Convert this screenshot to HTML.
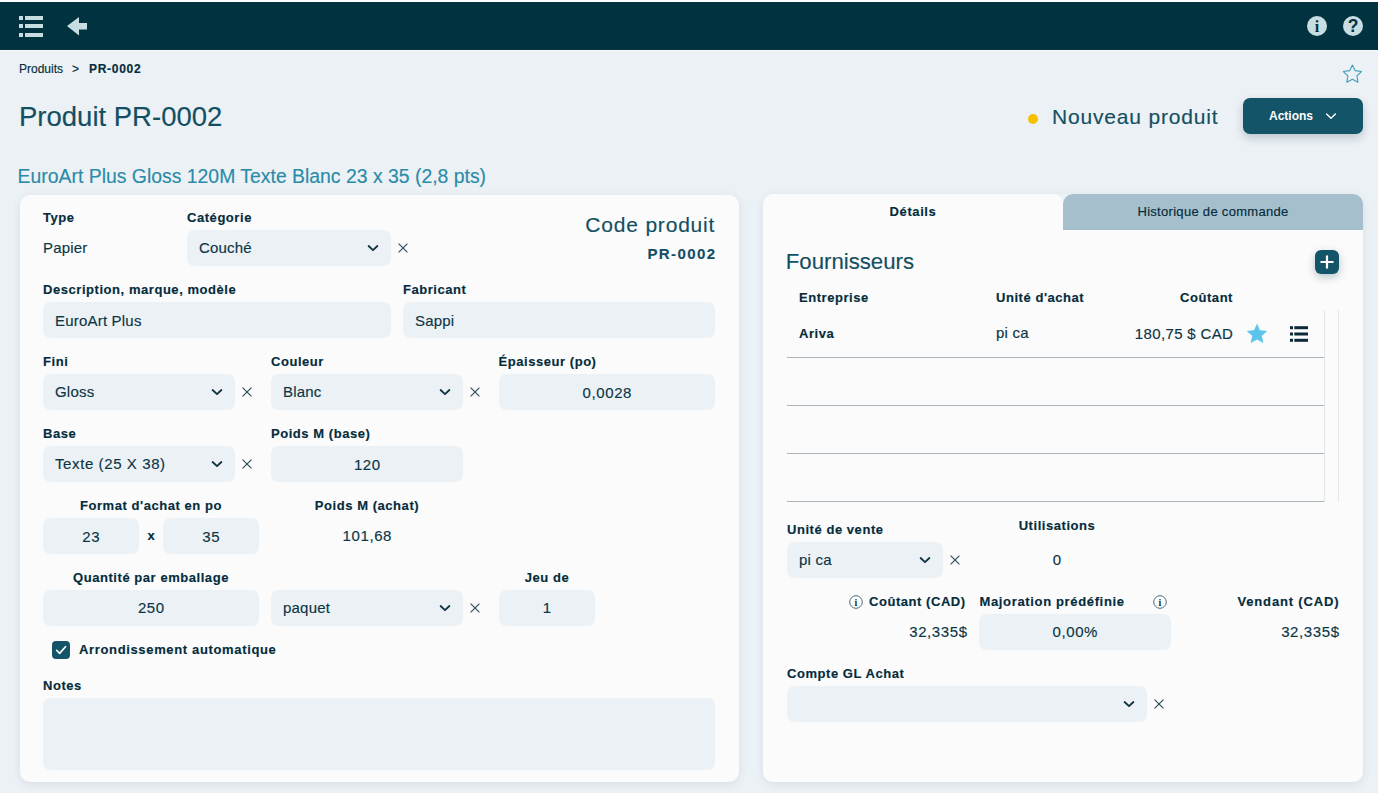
<!DOCTYPE html>
<html><head><meta charset="utf-8"><title>Produit PR-0002</title>
<style>
html,body{margin:0;padding:0;}
body{width:1378px;height:793px;overflow:hidden;position:relative;background:#ecf1f5;font-family:"Liberation Sans",sans-serif;}
.t{position:absolute;white-space:nowrap;line-height:1;-webkit-text-stroke:0.15px currentColor;}
.r{position:absolute;display:block;}
</style></head><body>
<div class="r" style="left:0px;top:0px;width:1378px;height:2px;background:#ffffff;border-radius:0px;"></div>
<div class="r" style="left:0px;top:2px;width:1378px;height:48px;background:#003240;border-radius:0px;"></div>
<div class="r" style="left:0px;top:50px;width:1378px;height:1px;background:#f7f9fb;border-radius:0px;"></div>
<svg class="r" style="left:18px;top:15px;" width="27" height="23" viewBox="0 0 27 23"><rect x="1" y="1" width="4" height="4" fill="#c7dde2"/><rect x="7" y="1" width="18" height="4" fill="#c7dde2"/><rect x="1" y="9" width="4" height="4" fill="#c7dde2"/><rect x="7" y="9" width="18" height="4" fill="#c7dde2"/><rect x="1" y="18" width="4" height="4" fill="#c7dde2"/><rect x="7" y="18" width="18" height="4" fill="#c7dde2"/></svg>
<svg class="r" style="left:66px;top:16px;" width="24" height="22" viewBox="0 0 24 22"><path d="M1 10 L13 1 L13 7 L21 7 L21 13.5 L13 13.5 L13 19.5 Z" fill="#c7dde2"/></svg>
<svg class="r" style="left:1306px;top:15px;" width="22" height="22" viewBox="0 0 22 22"><circle cx="11" cy="11" r="10" fill="#c7dde2"/><text x="11" y="17" text-anchor="middle" font-family="Liberation Serif" font-weight="bold" font-size="16" fill="#003240">i</text></svg>
<svg class="r" style="left:1342px;top:15px;" width="22" height="22" viewBox="0 0 22 22"><circle cx="11" cy="11" r="10" fill="#c7dde2"/><text x="11" y="17" text-anchor="middle" font-family="Liberation Sans" font-weight="bold" font-size="17.5" fill="#003240">?</text></svg>
<div class="t" style="top:62.84px;font-size:12px;color:#042c3b;left:19px;">Produits</div>
<div class="t" style="top:62.84px;font-size:12px;color:#042c3b;left:72px;">&gt;</div>
<div class="t" style="top:62.84px;font-size:12px;font-weight:bold;color:#042c3b;letter-spacing:0.7px;left:89px;">PR-0002</div>
<svg class="r" style="left:1341px;top:63px;" width="22" height="22" viewBox="0 0 22 22"><path d="M11.40,2.00 L14.19,7.66 L20.44,8.56 L15.92,12.97 L16.98,19.19 L11.40,16.25 L5.82,19.19 L6.88,12.97 L2.36,8.56 L8.61,7.66 Z" fill="none" stroke="#3d9dbb" stroke-width="1.1" stroke-linejoin="round"/></svg>
<div class="t" style="top:103.12px;font-size:27.5px;color:#134f62;left:19px;">Produit PR-0002</div>
<div class="r" style="left:1027.5px;top:113.5px;width:10px;height:10px;background:#f6c000;border-radius:5px;"></div>
<div class="t" style="top:105.92px;font-size:21px;color:#134f62;letter-spacing:0.82px;left:1052px;">Nouveau produit</div>
<div class="r" style="left:1243px;top:98px;width:120px;height:36px;background:#145468;border-radius:7px;box-shadow:0 4px 10px rgba(20,50,70,0.22);"></div>
<div class="t" style="top:110.14px;font-size:12px;font-weight:bold;color:#ffffff;left:1269px;-webkit-text-stroke:0;">Actions</div>
<svg class="r" style="left:1323px;top:108px;" width="16" height="16" viewBox="0 0 16 16"><path d="M3.6 6 L8 10.2 L12.4 6" fill="none" stroke="#ffffff" stroke-width="1.4" stroke-linecap="round" stroke-linejoin="round"/></svg>
<div class="t" style="top:167.08px;font-size:19.4px;color:#2a8ba9;left:17.6px;">EuroArt Plus Gloss 120M Texte Blanc 23 x 35 (2,8 pts)</div>
<div class="r" style="left:20px;top:195px;width:719px;height:587px;background:#fbfbfc;border-radius:10px;box-shadow:0 2px 9px rgba(30,60,90,0.10);"></div>
<div class="t" style="top:211.40px;font-size:13px;font-weight:bold;color:#042c3b;letter-spacing:0.55px;left:43px;">Type</div>
<div class="t" style="top:211.40px;font-size:13px;font-weight:bold;color:#042c3b;letter-spacing:0.55px;left:187px;">Catégorie</div>
<div class="t" style="top:239.70px;font-size:15px;color:#0b3544;letter-spacing:0.2px;left:43px;">Papier</div>
<div class="r" style="left:187px;top:230px;width:204px;height:36px;background:#ecf1f5;border-radius:7px;"></div>
<div class="t" style="top:240.30px;font-size:15px;color:#0b3544;letter-spacing:0.2px;left:199px;">Couché</div>
<svg class="r" style="left:365px;top:239.8px;" width="16" height="16" viewBox="0 0 16 16"><path d="M3.6 6 L8 10.2 L12.4 6" fill="none" stroke="#0f3340" stroke-width="1.8" stroke-linecap="round" stroke-linejoin="round"/></svg>
<svg class="r" style="left:397.3px;top:242.4px;" width="12" height="12" viewBox="0 0 12 12"><path d="M1.6 1.6 L10.4 10.4 M10.4 1.6 L1.6 10.4" fill="none" stroke="#2c4a56" stroke-width="1.15"/></svg>
<div class="t" style="top:213.92px;font-size:21px;color:#134f62;letter-spacing:0.8px;left:-284.79999999999995px;width:1000px;text-align:right;">Code produit</div>
<div class="t" style="top:246.20px;font-size:15px;font-weight:bold;color:#134f62;letter-spacing:1.4px;left:-283.6px;width:1000px;text-align:right;">PR-0002</div>
<div class="t" style="top:283.40px;font-size:13px;font-weight:bold;color:#042c3b;letter-spacing:0.55px;left:43px;">Description, marque, modèle</div>
<div class="t" style="top:283.40px;font-size:13px;font-weight:bold;color:#042c3b;letter-spacing:0.55px;left:403px;">Fabricant</div>
<div class="r" style="left:43px;top:302px;width:348px;height:36px;background:#ecf1f5;border-radius:7px;"></div>
<div class="t" style="top:313.10px;font-size:15px;color:#0b3544;letter-spacing:0.2px;left:55px;">EuroArt Plus</div>
<div class="r" style="left:403px;top:302px;width:312px;height:36px;background:#ecf1f5;border-radius:7px;"></div>
<div class="t" style="top:313.10px;font-size:15px;color:#0b3544;letter-spacing:0.2px;left:415px;">Sappi</div>
<div class="t" style="top:355.40px;font-size:13px;font-weight:bold;color:#042c3b;letter-spacing:0.55px;left:43px;">Fini</div>
<div class="t" style="top:355.40px;font-size:13px;font-weight:bold;color:#042c3b;letter-spacing:0.55px;left:271px;">Couleur</div>
<div class="t" style="top:355.40px;font-size:13px;font-weight:bold;color:#042c3b;letter-spacing:0.55px;left:498.5px;">Épaisseur (po)</div>
<div class="r" style="left:43px;top:374px;width:192px;height:36px;background:#ecf1f5;border-radius:7px;"></div>
<div class="t" style="top:384.30px;font-size:15px;color:#0b3544;letter-spacing:0.2px;left:55px;">Gloss</div>
<svg class="r" style="left:209px;top:383.8px;" width="16" height="16" viewBox="0 0 16 16"><path d="M3.6 6 L8 10.2 L12.4 6" fill="none" stroke="#0f3340" stroke-width="1.8" stroke-linecap="round" stroke-linejoin="round"/></svg>
<svg class="r" style="left:241.3px;top:386.4px;" width="12" height="12" viewBox="0 0 12 12"><path d="M1.6 1.6 L10.4 10.4 M10.4 1.6 L1.6 10.4" fill="none" stroke="#2c4a56" stroke-width="1.15"/></svg>
<div class="r" style="left:271px;top:374px;width:192px;height:36px;background:#ecf1f5;border-radius:7px;"></div>
<div class="t" style="top:384.30px;font-size:15px;color:#0b3544;letter-spacing:0.2px;left:283px;">Blanc</div>
<svg class="r" style="left:437px;top:383.8px;" width="16" height="16" viewBox="0 0 16 16"><path d="M3.6 6 L8 10.2 L12.4 6" fill="none" stroke="#0f3340" stroke-width="1.8" stroke-linecap="round" stroke-linejoin="round"/></svg>
<svg class="r" style="left:469.3px;top:386.4px;" width="12" height="12" viewBox="0 0 12 12"><path d="M1.6 1.6 L10.4 10.4 M10.4 1.6 L1.6 10.4" fill="none" stroke="#2c4a56" stroke-width="1.15"/></svg>
<div class="r" style="left:499px;top:374px;width:216px;height:36px;background:#ecf1f5;border-radius:7px;"></div>
<div class="t" style="top:384.80px;font-size:15px;color:#0b3544;letter-spacing:0.6px;left:107.29999999999995px;width:1000px;text-align:center;">0,0028</div>
<div class="t" style="top:427.40px;font-size:13px;font-weight:bold;color:#042c3b;letter-spacing:0.55px;left:43px;">Base</div>
<div class="t" style="top:427.40px;font-size:13px;font-weight:bold;color:#042c3b;letter-spacing:0.55px;left:271px;">Poids M (base)</div>
<div class="r" style="left:43px;top:446px;width:192px;height:36px;background:#ecf1f5;border-radius:7px;"></div>
<div class="t" style="top:456.30px;font-size:15px;color:#0b3544;letter-spacing:0.6px;left:55px;">Texte (25 X 38)</div>
<svg class="r" style="left:209px;top:455.8px;" width="16" height="16" viewBox="0 0 16 16"><path d="M3.6 6 L8 10.2 L12.4 6" fill="none" stroke="#0f3340" stroke-width="1.8" stroke-linecap="round" stroke-linejoin="round"/></svg>
<svg class="r" style="left:241.3px;top:458.4px;" width="12" height="12" viewBox="0 0 12 12"><path d="M1.6 1.6 L10.4 10.4 M10.4 1.6 L1.6 10.4" fill="none" stroke="#2c4a56" stroke-width="1.15"/></svg>
<div class="r" style="left:271px;top:446px;width:192px;height:36px;background:#ecf1f5;border-radius:7px;"></div>
<div class="t" style="top:456.80px;font-size:15px;color:#0b3544;letter-spacing:0.6px;left:-132.7px;width:1000px;text-align:center;">120</div>
<div class="t" style="top:499.00px;font-size:13px;font-weight:bold;color:#042c3b;letter-spacing:0.55px;left:-349px;width:1000px;text-align:center;">Format d'achat en po</div>
<div class="t" style="top:499.00px;font-size:13px;font-weight:bold;color:#042c3b;letter-spacing:0.55px;left:-133px;width:1000px;text-align:center;">Poids M (achat)</div>
<div class="r" style="left:43px;top:518px;width:96px;height:36px;background:#ecf1f5;border-radius:7px;"></div>
<div class="t" style="top:528.80px;font-size:15px;color:#0b3544;letter-spacing:0.6px;left:-408.7px;width:1000px;text-align:center;">23</div>
<div class="t" style="top:529.00px;font-size:13px;font-weight:bold;color:#042c3b;left:-349px;width:1000px;text-align:center;">x</div>
<div class="r" style="left:163px;top:518px;width:96px;height:36px;background:#ecf1f5;border-radius:7px;"></div>
<div class="t" style="top:528.80px;font-size:15px;color:#0b3544;letter-spacing:0.6px;left:-288.7px;width:1000px;text-align:center;">35</div>
<div class="t" style="top:528.10px;font-size:15px;color:#0b3544;letter-spacing:0.6px;left:-132.7px;width:1000px;text-align:center;">101,68</div>
<div class="t" style="top:570.80px;font-size:13px;font-weight:bold;color:#042c3b;letter-spacing:0.55px;left:-349px;width:1000px;text-align:center;">Quantité par emballage</div>
<div class="t" style="top:570.80px;font-size:13px;font-weight:bold;color:#042c3b;letter-spacing:0.55px;left:47px;width:1000px;text-align:center;">Jeu de</div>
<div class="r" style="left:43px;top:590px;width:216px;height:36px;background:#ecf1f5;border-radius:7px;"></div>
<div class="t" style="top:600.20px;font-size:15px;color:#0b3544;letter-spacing:0.6px;left:-348.7px;width:1000px;text-align:center;">250</div>
<div class="r" style="left:271px;top:590px;width:192px;height:36px;background:#ecf1f5;border-radius:7px;"></div>
<div class="t" style="top:600.30px;font-size:15px;color:#0b3544;letter-spacing:0.2px;left:283px;">paquet</div>
<svg class="r" style="left:437px;top:599.8px;" width="16" height="16" viewBox="0 0 16 16"><path d="M3.6 6 L8 10.2 L12.4 6" fill="none" stroke="#0f3340" stroke-width="1.8" stroke-linecap="round" stroke-linejoin="round"/></svg>
<svg class="r" style="left:469.3px;top:602.4px;" width="12" height="12" viewBox="0 0 12 12"><path d="M1.6 1.6 L10.4 10.4 M10.4 1.6 L1.6 10.4" fill="none" stroke="#2c4a56" stroke-width="1.15"/></svg>
<div class="r" style="left:499px;top:590px;width:96px;height:36px;background:#ecf1f5;border-radius:7px;"></div>
<div class="t" style="top:600.20px;font-size:15px;color:#0b3544;letter-spacing:0.6px;left:47.299999999999955px;width:1000px;text-align:center;">1</div>
<div class="r" style="left:52px;top:641px;width:18px;height:18px;background:#145468;border-radius:4px;"></div>
<svg class="r" style="left:52px;top:641px;" width="18" height="18" viewBox="0 0 18 18"><path d="M4.6 9.3 L7.6 12.4 L13.5 5.7" fill="none" stroke="#ffffff" stroke-width="1.6" stroke-linecap="round" stroke-linejoin="round"/></svg>
<div class="t" style="top:643.20px;font-size:13px;font-weight:bold;color:#042c3b;letter-spacing:0.65px;left:79px;">Arrondissement automatique</div>
<div class="t" style="top:679.40px;font-size:13px;font-weight:bold;color:#042c3b;letter-spacing:0.55px;left:43px;">Notes</div>
<div class="r" style="left:43px;top:698px;width:672px;height:72px;background:#ecf1f5;border-radius:7px;"></div>
<div class="r" style="left:763px;top:194px;width:600px;height:588px;background:transparent;border-radius:10px;box-shadow:0 2px 9px rgba(30,60,90,0.10);"></div>
<div class="r" style="left:763px;top:194px;width:300px;height:40px;background:#fbfbfc;border-radius:0px;border-radius:10px 10px 0 0;"></div>
<div class="r" style="left:1063px;top:194px;width:300px;height:36px;background:#a5bfcc;border-radius:0px;border-radius:10px 10px 0 0;"></div>
<div class="r" style="left:763px;top:230px;width:600px;height:552px;background:#fbfbfc;border-radius:0px;border-radius:0 0 10px 10px;"></div>
<div class="t" style="top:205.00px;font-size:13px;font-weight:bold;color:#042c3b;letter-spacing:0.6px;left:413px;width:1000px;text-align:center;">Détails</div>
<div class="t" style="top:205.00px;font-size:13px;color:#042c3b;letter-spacing:0.3px;left:713px;width:1000px;text-align:center;">Historique de commande</div>
<div class="t" style="top:251.21px;font-size:22.2px;color:#134f62;left:785.8px;">Fournisseurs</div>
<div class="r" style="left:1315px;top:250px;width:24px;height:24px;background:#145468;border-radius:6px;box-shadow:0 3px 8px rgba(10,50,70,0.28);"></div>
<svg class="r" style="left:1315px;top:250px;" width="24" height="24" viewBox="0 0 24 24"><path d="M12 6.3 V17.7 M6.3 12 H17.7" stroke="#ffffff" stroke-width="2.2" stroke-linecap="round"/></svg>
<div class="t" style="top:290.70px;font-size:13px;font-weight:bold;color:#042c3b;letter-spacing:0.55px;left:799px;">Entreprise</div>
<div class="t" style="top:290.70px;font-size:13px;font-weight:bold;color:#042c3b;letter-spacing:0.55px;left:996px;">Unité d'achat</div>
<div class="t" style="top:290.80px;font-size:13px;font-weight:bold;color:#042c3b;letter-spacing:0.55px;left:233px;width:1000px;text-align:right;">Coûtant</div>
<div class="r" style="left:1324px;top:310px;width:1px;height:192px;background:#e4e5e6;border-radius:0px;"></div>
<div class="r" style="left:1338px;top:310px;width:1px;height:192px;background:#e6e7e8;border-radius:0px;"></div>
<div class="r" style="left:787px;top:357px;width:537px;height:1px;background:#a9b6be;border-radius:0px;"></div>
<div class="r" style="left:787px;top:405px;width:537px;height:1px;background:#a9b6be;border-radius:0px;"></div>
<div class="r" style="left:787px;top:453px;width:537px;height:1px;background:#a9b6be;border-radius:0px;"></div>
<div class="r" style="left:787px;top:501px;width:537px;height:1px;background:#a9b6be;border-radius:0px;"></div>
<div class="t" style="top:327.00px;font-size:13px;font-weight:bold;color:#042c3b;letter-spacing:0.55px;left:799px;">Ariva</div>
<div class="t" style="top:324.80px;font-size:15px;color:#0b3544;letter-spacing:0.2px;left:996px;">pi ca</div>
<div class="t" style="top:326.30px;font-size:15px;color:#0b3544;letter-spacing:0.35px;left:233.29999999999995px;width:1000px;text-align:right;">180,75 $ CAD</div>
<svg class="r" style="left:1246px;top:323px;" width="22" height="22" viewBox="0 0 22 22"><path d="M11.00,1.30 L13.79,7.56 L20.61,8.28 L15.51,12.87 L16.94,19.57 L11.00,16.15 L5.06,19.57 L6.49,12.87 L1.39,8.28 L8.21,7.56 Z" fill="#5cc3ea" stroke="#5cc3ea" stroke-width="0.6" stroke-linejoin="round"/></svg>
<svg class="r" style="left:1289px;top:325px;" width="20" height="18" viewBox="0 0 20 18"><rect x="1" y="1.2" width="3" height="3" fill="#0a2a38"/><rect x="5.3" y="1.2" width="13.7" height="3" fill="#0a2a38"/><rect x="1" y="7.5" width="3" height="3" fill="#0a2a38"/><rect x="5.3" y="7.5" width="13.7" height="3" fill="#0a2a38"/><rect x="1" y="13.8" width="3" height="3" fill="#0a2a38"/><rect x="5.3" y="13.8" width="13.7" height="3" fill="#0a2a38"/></svg>
<div class="t" style="top:522.90px;font-size:13px;font-weight:bold;color:#042c3b;letter-spacing:0.55px;left:787px;">Unité de vente</div>
<div class="t" style="top:518.50px;font-size:13px;font-weight:bold;color:#042c3b;letter-spacing:0.55px;left:557px;width:1000px;text-align:center;">Utilisations</div>
<div class="r" style="left:787px;top:542px;width:156px;height:36px;background:#ecf1f5;border-radius:7px;"></div>
<div class="t" style="top:552.30px;font-size:15px;color:#0b3544;letter-spacing:0.2px;left:799px;">pi ca</div>
<svg class="r" style="left:917px;top:551.8px;" width="16" height="16" viewBox="0 0 16 16"><path d="M3.6 6 L8 10.2 L12.4 6" fill="none" stroke="#0f3340" stroke-width="1.8" stroke-linecap="round" stroke-linejoin="round"/></svg>
<svg class="r" style="left:949.3px;top:554.4px;" width="12" height="12" viewBox="0 0 12 12"><path d="M1.6 1.6 L10.4 10.4 M10.4 1.6 L1.6 10.4" fill="none" stroke="#2c4a56" stroke-width="1.15"/></svg>
<div class="t" style="top:551.80px;font-size:15px;color:#0b3544;letter-spacing:0.6px;left:557.3px;width:1000px;text-align:center;">0</div>
<svg class="r" style="left:847.5px;top:594.4px;" width="16" height="16" viewBox="0 0 16 16"><circle cx="8" cy="8" r="6.3" fill="none" stroke="#4d6b77" stroke-width="1"/><text x="8" y="12" text-anchor="middle" font-family="Liberation Serif" font-weight="bold" font-size="10" fill="#0c3443">i</text></svg>
<div class="t" style="top:594.90px;font-size:13px;font-weight:bold;color:#042c3b;letter-spacing:0.55px;left:869px;">Coûtant (CAD)</div>
<div class="t" style="top:594.90px;font-size:13px;font-weight:bold;color:#042c3b;letter-spacing:0.65px;left:979.5px;">Majoration prédéfinie</div>
<svg class="r" style="left:1151.6px;top:594.4px;" width="16" height="16" viewBox="0 0 16 16"><circle cx="8" cy="8" r="6.3" fill="none" stroke="#4d6b77" stroke-width="1"/><text x="8" y="12" text-anchor="middle" font-family="Liberation Serif" font-weight="bold" font-size="10" fill="#0c3443">i</text></svg>
<div class="t" style="top:595.00px;font-size:13px;font-weight:bold;color:#042c3b;letter-spacing:0.83px;left:339.29999999999995px;width:1000px;text-align:right;">Vendant (CAD)</div>
<div class="t" style="top:623.80px;font-size:15px;color:#0b3544;letter-spacing:0.6px;left:-32.39999999999998px;width:1000px;text-align:right;">32,335$</div>
<div class="r" style="left:979px;top:614px;width:192px;height:36px;background:#ecf1f5;border-radius:7px;"></div>
<div class="t" style="top:623.80px;font-size:15px;color:#0b3544;letter-spacing:0.6px;left:575.3px;width:1000px;text-align:center;">0,00%</div>
<div class="t" style="top:623.80px;font-size:15px;color:#0b3544;letter-spacing:0.6px;left:339.5999999999999px;width:1000px;text-align:right;">32,335$</div>
<div class="t" style="top:667.00px;font-size:13px;font-weight:bold;color:#042c3b;letter-spacing:0.55px;left:787px;">Compte GL Achat</div>
<div class="r" style="left:787px;top:686px;width:360px;height:36px;background:#ecf1f5;border-radius:7px;"></div>
<svg class="r" style="left:1121px;top:695.8px;" width="16" height="16" viewBox="0 0 16 16"><path d="M3.6 6 L8 10.2 L12.4 6" fill="none" stroke="#0f3340" stroke-width="1.8" stroke-linecap="round" stroke-linejoin="round"/></svg>
<svg class="r" style="left:1153.3px;top:698.4px;" width="12" height="12" viewBox="0 0 12 12"><path d="M1.6 1.6 L10.4 10.4 M10.4 1.6 L1.6 10.4" fill="none" stroke="#2c4a56" stroke-width="1.15"/></svg>
</body></html>
